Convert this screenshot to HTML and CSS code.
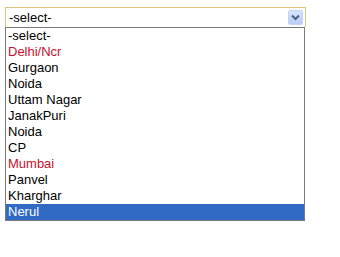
FILE: index.html
```html
<!DOCTYPE html>
<html>
<head>
<meta charset="utf-8">
<link rel="stylesheet" href="styles.css">
</head>
<body>
<div class="combo">
  <div class="select">
    <span class="value">-select-</span>
    <span class="btn">
      <svg width="15" height="15" viewBox="0 0 15 15">
        <path d="M4 5.5 L7.5 9 L11 5.5" fill="none" stroke="#4d6185" stroke-width="2"/>
      </svg>
    </span>
  </div>
  <ul class="list">
    <li>-select-</li>
    <li class="red">Delhi/Ncr</li>
    <li>Gurgaon</li>
    <li>Noida</li>
    <li>Uttam Nagar</li>
    <li>JanakPuri</li>
    <li>Noida</li>
    <li>CP</li>
    <li class="red">Mumbai</li>
    <li>Panvel</li>
    <li>Kharghar</li>
    <li class="sel">Nerul</li>
  </ul>
</div>
</body>
</html>
```
FILE: styles.css
```css
html, body {
  margin: 0;
  padding: 0;
  background: #fff;
}
body {
  font-family: "Liberation Sans", Arial, sans-serif;
  font-size: 13px;
  color: #000;
}
.combo {
  margin: 7px 0 0 5px;
  width: 301px;
  display: flex;
  flex-direction: column;
}
.select {
  height: 20px;
  box-sizing: border-box;
  border: 1px solid #e3c27d;
  border-bottom: none;
  display: flex;
  align-items: center;
  justify-content: space-between;
  padding: 0 2px 0 3px;
}
.value {
  line-height: 16px;
}
.btn {
  width: 15px;
  height: 15px;
  box-sizing: border-box;
  background: linear-gradient(#d8e4fb, #b9cdf6);
  border: 1px solid #c3d3f5;
  border-radius: 2px;
  display: flex;
  align-items: center;
  justify-content: center;
}
.btn svg {
  display: block;
  margin: -1px;
}
.list {
  list-style: none;
  margin: 0;
  padding: 0;
  width: 300px;
  box-sizing: border-box;
  border: 1px solid #7a7a7a;
}
.list li {
  height: 16px;
  line-height: 16px;
  padding-left: 2px;
}
.list .red {
  color: #c8102e;
}
.list .sel {
  background: #316ac5;
  color: #fff;
}
```
